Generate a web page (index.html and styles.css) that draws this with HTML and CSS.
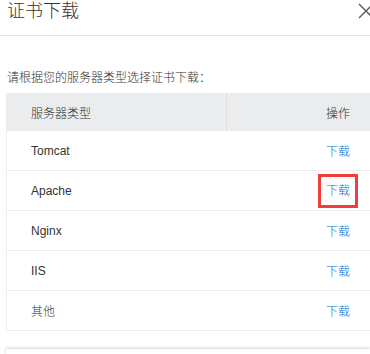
FILE: index.html
```html
<!DOCTYPE html>
<html lang="zh-CN">
<head>
    <meta charset="UTF-8">
    <meta name="viewport" content="width=device-width, initial-scale=1.0">
    <title>证书下载</title>
    <link rel="stylesheet" href="styles.css">
</head>
<body>
    <div class="dialog">
        <div class="dialog-header">
            <h2 class="dialog-title">证书下载</h2>
            <span class="dialog-close">
                <svg width="16" height="16" viewBox="0 0 16 16">
                    <path d="M1 1 L15 15 M15 1 L1 15" stroke="#555" stroke-width="1.3" fill="none"/>
                </svg>
            </span>
        </div>
        <div class="dialog-body">
            <p class="intro">请根据您的服务器类型选择证书下载：</p>
            <table class="cert-table">
                <thead>
                    <tr>
                        <th class="col-type">服务器类型</th>
                        <th class="col-action">操作</th>
                    </tr>
                </thead>
                <tbody>
                    <tr><td>Tomcat</td><td class="col-action"><a href="#">下载</a></td></tr>
                    <tr><td>Apache</td><td class="col-action"><a href="#" class="marked">下载</a></td></tr>
                    <tr><td>Nginx</td><td class="col-action"><a href="#">下载</a></td></tr>
                    <tr><td>IIS</td><td class="col-action"><a href="#">下载</a></td></tr>
                    <tr><td>其他</td><td class="col-action"><a href="#">下载</a></td></tr>
                </tbody>
            </table>
            <div class="footer-panel"></div>
        </div>
    </div>
</body>
</html>
```

FILE: styles.css
```css
:root {
    --color-text: #333333;
    --color-link: #0a6fd1;
    --color-line: #ededed;
    --color-head: #ebeced;
    --color-mark: #f23b3b;
}

body {
    margin: 0;
    padding: 0;
    background: #ffffff;
    color: var(--color-text);
    font-family: "Liberation Sans", "Noto Sans CJK SC", sans-serif;
    font-weight: 300;
    overflow: hidden;
}

.dialog-header {
    height: 35px;
    border-bottom: 1px solid #e3e3e3;
    display: flex;
    justify-content: space-between;
    align-items: flex-start;
}

.dialog-title {
    margin: 0;
    padding: 0 0 0 7px;
    font-size: 18px;
    font-weight: 300;
    line-height: 23px;
}

.dialog-close {
    display: block;
    margin: 3px -4px 0 0;
    width: 16px;
    height: 16px;
}

.dialog-body {
    padding: 0 0 0 6px;
}

.intro {
    margin: 34px 0 0 1px;
    font-size: 12px;
    line-height: 16px;
}

.cert-table {
    margin-top: 7px;
    width: 100%;
    border-collapse: collapse;
    font-size: 12px;
    border-left: 1px solid var(--color-line);
}

.cert-table th {
    background: var(--color-head);
    font-weight: 300;
    height: 38px;
    padding: 0;
}

.cert-table th.col-type {
    text-align: left;
    padding-left: 24px;
    width: 195px;
    border-right: 1px solid #dcdcdc;
}

.cert-table td {
    height: 39px;
    padding: 0 0 0 24px;
    border-bottom: 1px solid var(--color-line);
}

.cert-table .col-action {
    text-align: right;
    padding-right: 20px;
}

.cert-table a {
    color: var(--color-link);
    text-decoration: none;
}

.cert-table a.marked {
    display: inline-block;
    outline: 3px solid var(--color-mark);
    outline-offset: 5px;
    line-height: 18px;
}

.footer-panel {
    margin-top: 18px;
    height: 20px;
    background: #ffffff;
    box-shadow: 0 -1px 3px rgba(0, 0, 0, 0.18);
}
```
